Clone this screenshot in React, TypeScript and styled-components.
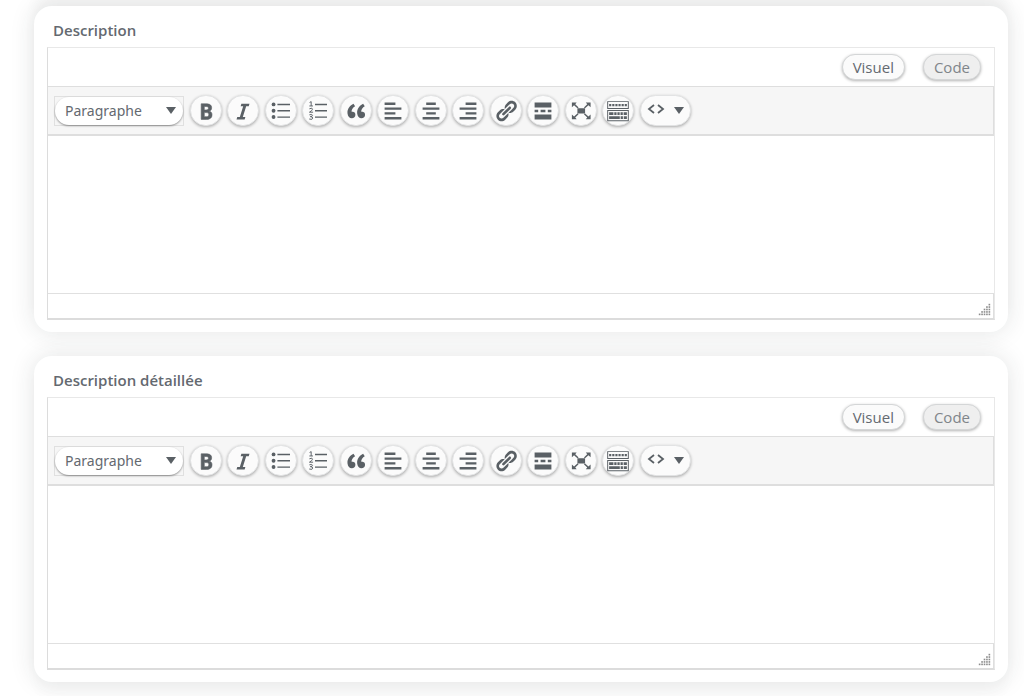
import React from "react";
import styled, { createGlobalStyle } from "styled-components";

const GlobalStyle = createGlobalStyle`
  * { box-sizing: border-box; }
  body {
    margin: 0;
    background: #fff;
    color: #646970;
    font: 15px/20px "Open Sans", "Noto Sans", sans-serif;
    overflow-x: hidden;
  }
  button, select, textarea { font: inherit; color: inherit; margin: 0; }
`;

const Page = styled.main`
  display: flex;
  flex-direction: column;
  gap: 24px;
  padding: 6px 16px 14px 34px;
`;

const Card = styled.section`
  padding: 14px 13px 12px;
  border-radius: 18px;
  background: #fff;
  box-shadow: 0 0 24px rgba(40, 50, 50, 0.13);

  &:first-of-type {
    box-shadow: 0 0 24px rgba(40, 50, 50, 0.13), 0 -14px 12px rgba(0, 0, 0, 0.03);
  }
  &:last-of-type {
    box-shadow: 0 0 24px rgba(40, 50, 50, 0.13), 0 14px 12px rgba(40, 60, 60, 0.02);
  }
`;

const Title = styled.label`
  display: block;
  margin: 0 0 6px 6px;
  font-size: 15px;
  line-height: 21px;
  font-weight: 600;
`;

const Editor = styled.div`
  border: 1px solid #e8e8e8;
  border-left-color: #dcdcdc;
  border-bottom: 2px solid #dcdcdc;
`;

const Tabs = styled.div`
  display: flex;
  justify-content: flex-end;
  gap: 18px;
  height: 38px;
  padding: 6px 13px;
`;

const raised = `
  border: 1px solid #d4d6d7;
  box-shadow: 0 1px 3px rgba(0, 0, 0, 0.3);
`;

const Tab = styled.button<{ $dim?: boolean }>`
  ${raised}
  padding: 0 10px;
  border-radius: 13px;
  background: ${(p) => (p.$dim ? "#efefef" : "#fbfbfb")};
  color: ${(p) => (p.$dim ? "#80858a" : "#646970")};
  line-height: 24px;
`;

const Toolbar = styled.div`
  display: flex;
  align-items: center;
  gap: 6px;
  height: 50px;
  padding: 0 6px;
  border: 1px solid #dedede;
  border-width: 1px 1px 2px 0;
  background: #f6f6f6;
`;

const FormatBox = styled.div`
  position: relative;
  width: 130px;
  height: 30px;
  border: 1px solid #e0e0e0;
`;

const Format = styled.select`
  appearance: none;
  display: block;
  width: 100%;
  height: 28px;
  padding: 0 28px 0 10px;
  border: 0;
  border-radius: 14px;
  background: #fff;
  box-shadow: 0 1px 2px rgba(0, 0, 0, 0.4);
  font-family: "Noto Sans", "Open Sans", sans-serif;
  font-size: 14px;
  line-height: 28px;
`;

const FormatArrow = styled.span`
  position: absolute;
  top: 0;
  right: 7px;
  display: flex;
  align-items: center;
  height: 28px;
  pointer-events: none;
`;

const Tools = styled.div`
  display: flex;
  justify-content: space-between;
  width: 444px;
`;

const Tool = styled.button<{ $wide?: boolean }>`
  ${raised}
  display: flex;
  align-items: center;
  justify-content: center;
  flex: none;
  width: ${(p) => (p.$wide ? 51 : 32)}px;
  height: 31px;
  padding: 0;
  border-color: #e2e3e4;
  border-radius: 16px;
  background: #fbfbfb;
`;

const Icon = styled.svg`
  display: block;
  flex: none;
  width: 24px;
  height: 24px;
  fill: #5a6065;
`;

const CodeIcon = styled.svg`
  width: 18px;
  height: 14px;
  margin: 0 9px 4px 0;
  fill: none;
  stroke: #5a6065;
  stroke-width: 1.8;
`;

const Triangle = styled.svg`
  width: 10px;
  height: 7px;
  fill: #5a6065;
`;

const Content = styled.textarea`
  display: block;
  width: 100%;
  height: 157px;
  padding: 8px 10px;
  border: 0;
  outline: 0;
  resize: none;
  background: #fff;
`;

const StatusBar = styled.div`
  display: flex;
  align-items: flex-end;
  justify-content: flex-end;
  height: 25px;
  padding: 0 2px 2px;
  border-top: 1px solid #e0e0e0;
  border-right: 1px solid #dedede;
`;

const Grip = styled.svg`
  width: 13px;
  height: 13px;
  fill: #8c8c8c;
`;

const Bullets = (
  <>
    <circle cx="3.8" cy="4.5" r="1.6" />
    <circle cx="3.8" cy="9.8" r="1.6" />
    <circle cx="3.8" cy="15" r="1.6" />
    <path d="M7 4h10.5v1.2H7zM7 9.2h10.5v1.2H7zM7 14.5h10.5v1.2H7z" />
  </>
);

const Numbers = (
  <>
    <path d="M7.5 4h10v1.2h-10zM7.5 9.2h10v1.2h-10zM7.5 14.5h10v1.2h-10z" />
    <path
      fill="none"
      stroke="#5a6065"
      strokeWidth="0.8"
      d="M3 2.9l1.3-.7v3.6M2.8 5.8h3M2.8 8.2q2.7-1.3 2.6.3 0 1-2.5 2.5h3M2.8 13.2q2.6-.9 2.6.3 0 1.2-1.8 1.2 2 0 2 1.2 0 1.7-2.9.8"
    />
  </>
);

const Fullscreen = (
  <>
    <path d="M7 7.8h6.4v4.2H7zM2.4 3h4l-1.2 1.3L8 7 7 7.8 4.2 5.3 2.4 6.8zM18 3h-4l1.2 1.3L12.4 7l1 .8 2.8-2.5L18 6.8zM2.4 16.8h4l-1.2-1.3L8 12.8l-1-.8-2.8 2.5L2.4 13zM18 16.8h-4l1.2-1.3-2.8-2.7 1-.8 2.8 2.5L18 13z" />
  </>
);

const Keyboard = (
  <path
    fillRule="evenodd"
    d="M1 1.8h18v6.6H1zM1.8 2.6v5h16.4v-5zM1 9.2h18v9.4H1zM1.8 10v7.8h16.4V10zM2.6 4.1h1.8v2H2.6zM5.2 4.1H7v2H5.2zM7.8 4.1h1.8v2H7.8zM10.4 4.1h1.8v2h-1.8zM13 4.1h1.8v2H13zM15.6 4.1h1.8v2h-1.8zM2.6 11h3.6v2.4H2.6zM6.9 11h1.9v2.4H6.9zM9.5 11h1.9v2.4H9.5zM12.1 11H14v2.4h-1.9zM14.7 11h2.7v2.4h-2.7zM2.6 14.3h8.9v2.4H2.6zM12.2 14.3h1.9v2.4h-1.9zM14.8 14.3h2.6v2.4h-2.6z"
  />
);

const tools: { name: string; icon: React.ReactNode }[] = [
  {
    name: "Gras",
    icon: (
      <path d="M6 4v13h4.54c1.37 0 2.46-.33 3.26-1 .8-.66 1.2-1.58 1.2-2.77 0-.84-.17-1.51-.51-2.01s-.9-.85-1.67-1.03v-.09c.57-.1 1.02-.4 1.36-.9s.51-1.13.51-1.91c0-1.14-.39-1.98-1.17-2.5C12.75 4.26 11.5 4 9.78 4H6zm2.57 5.15V6.26h1.36c.73 0 1.27.11 1.61.32.34.22.51.58.51 1.07 0 .54-.16.92-.47 1.15s-.82.35-1.51.35h-1.5zm0 2.19h1.6c1.44 0 2.16.53 2.16 1.61 0 .6-.17 1.05-.51 1.34s-.86.43-1.57.43H8.57v-3.38z" stroke="#5a6065" strokeWidth="0.5" />
    ),
  },
  {
    name: "Italique",
    icon: (
      <path d="M14.78 6h-2.13l-2.8 9h2.12l-.62 2H4.6l.62-2h2.14l2.8-9H8.03l.62-2h6.75z" />
    ),
  },
  { name: "Liste à puces", icon: Bullets },
  { name: "Liste numérotée", icon: Numbers },
  {
    name: "Citation",
    icon: (
      <path d="M9.49 13.22c0-.74-.2-1.38-.61-1.9-.62-.78-1.83-.88-2.53-.72-.29-1.65 1.11-3.75 2.92-4.65L7.88 4c-2.73 1.3-5.42 4.28-4.96 8.05C3.21 14.43 4.59 16 6.54 16c.85 0 1.56-.25 2.12-.75s.83-1.18.83-2.03zm8.05 0c0-.74-.2-1.38-.61-1.9-.63-.78-1.83-.88-2.53-.72-.29-1.65 1.11-3.75 2.92-4.65L15.93 4c-2.73 1.3-5.41 4.28-4.95 8.05.29 2.38 1.66 3.95 3.61 3.95.85 0 1.56-.25 2.12-.75s.83-1.18.83-2.03z" />
    ),
  },
  { name: "Aligner à gauche", icon: <path d="M12 5V3H3v2h9zm5 4V7H3v2h14zm-5 4v-2H3v2h9zm5 4v-2H3v2h14z" /> },
  { name: "Centrer", icon: <path d="M14 5V3H6v2h8zm3 4V7H3v2h14zm-3 4v-2H6v2h8zm3 4v-2H3v2h14z" /> },
  { name: "Aligner à droite", icon: <path d="M17 5V3H8v2h9zm0 4V7H3v2h14zm0 4v-2H8v2h9zm0 4v-2H3v2h14z" /> },
  {
    name: "Lien",
    icon: (
      <path d="M17.74 2.76c1.68 1.69 1.68 4.41 0 6.1l-1.53 1.52c-1.12 1.12-2.7 1.47-4.14 1.09l2.62-2.61.76-.77.76-.76c.84-.84.84-2.2 0-3.04-.84-.85-2.2-.85-3.04 0l-.77.76-3.38 3.38c-.37-1.44-.02-3.02 1.1-4.14l1.52-1.53c1.69-1.68 4.42-1.68 6.1 0zM8.59 13.43l5.34-5.34c.42-.42.42-1.1 0-1.52-.44-.43-1.13-.39-1.53 0l-5.33 5.34c-.42.42-.42 1.1 0 1.52.44.43 1.13.39 1.52 0zm-.76 2.29l4.14-4.15c.38 1.44.03 3.02-1.09 4.14l-1.52 1.53c-1.69 1.68-4.41 1.68-6.1 0-1.68-1.68-1.68-4.42 0-6.1l1.53-1.52c1.12-1.12 2.7-1.47 4.14-1.1l-4.14 4.15c-.85.84-.85 2.2 0 3.05.84.84 2.2.84 3.04 0z" />
    ),
  },
  { name: "Lire la suite", icon: <path d="M17 7V3H3v4h14zM6 11V9H3v2h3zm6 0V9H8v2h4zm5 0V9h-3v2h3zm0 6v-4H3v4h14z" /> },
  { name: "Plein écran", icon: Fullscreen },
  { name: "Ouvrir la barre d’outils", icon: Keyboard },
];

const Arrow = () => (
  <Triangle viewBox="0 0 10 7" aria-hidden="true">
    <path d="M0 0h10L5 7z" />
  </Triangle>
);

const gripDots = [0, 1, 2, 3, 4].flatMap((row) =>
  Array.from({ length: row + 1 }, (_, i) => ({ x: 13 - i * 3, y: 1 + row * 3 }))
);

function RichEditor({ id, title }: { id: string; title: string }) {
  return (
    <Card>
      <Title htmlFor={id}>{title}</Title>
      <Editor>
        <Tabs>
          <Tab type="button">Visuel</Tab>
          <Tab type="button" $dim>Code</Tab>
        </Tabs>
        <Toolbar role="toolbar" aria-label={title}>
          <FormatBox>
            <Format aria-label="Format">
              <option>Paragraphe</option>
            </Format>
            <FormatArrow><Arrow /></FormatArrow>
          </FormatBox>
          <Tools>
            {tools.map((t) => (
              <Tool key={t.name} type="button" aria-label={t.name}>
                <Icon viewBox="0 0 20 20" aria-hidden="true">{t.icon}</Icon>
              </Tool>
            ))}
          </Tools>
          <Tool type="button" $wide aria-label="Code court">
            <CodeIcon viewBox="0 0 18 14" aria-hidden="true">
              <path d="M7 3L2 7l5 4M11 3l5 4-5 4" />
            </CodeIcon>
            <Arrow />
          </Tool>
        </Toolbar>
        <Content id={id} />
        <StatusBar>
          <Grip viewBox="0 0 16 16" aria-hidden="true">
            {gripDots.map((d) => (
              <rect key={`${d.x}-${d.y}`} x={d.x} y={d.y} width="2" height="2" />
            ))}
          </Grip>
        </StatusBar>
      </Editor>
    </Card>
  );
}

export default function App() {
  return (
    <>
      <GlobalStyle />
      <Page>
        <RichEditor id="description" title="Description" />
        <RichEditor id="description-detaillee" title="Description détaillée" />
      </Page>
    </>
  );
}
